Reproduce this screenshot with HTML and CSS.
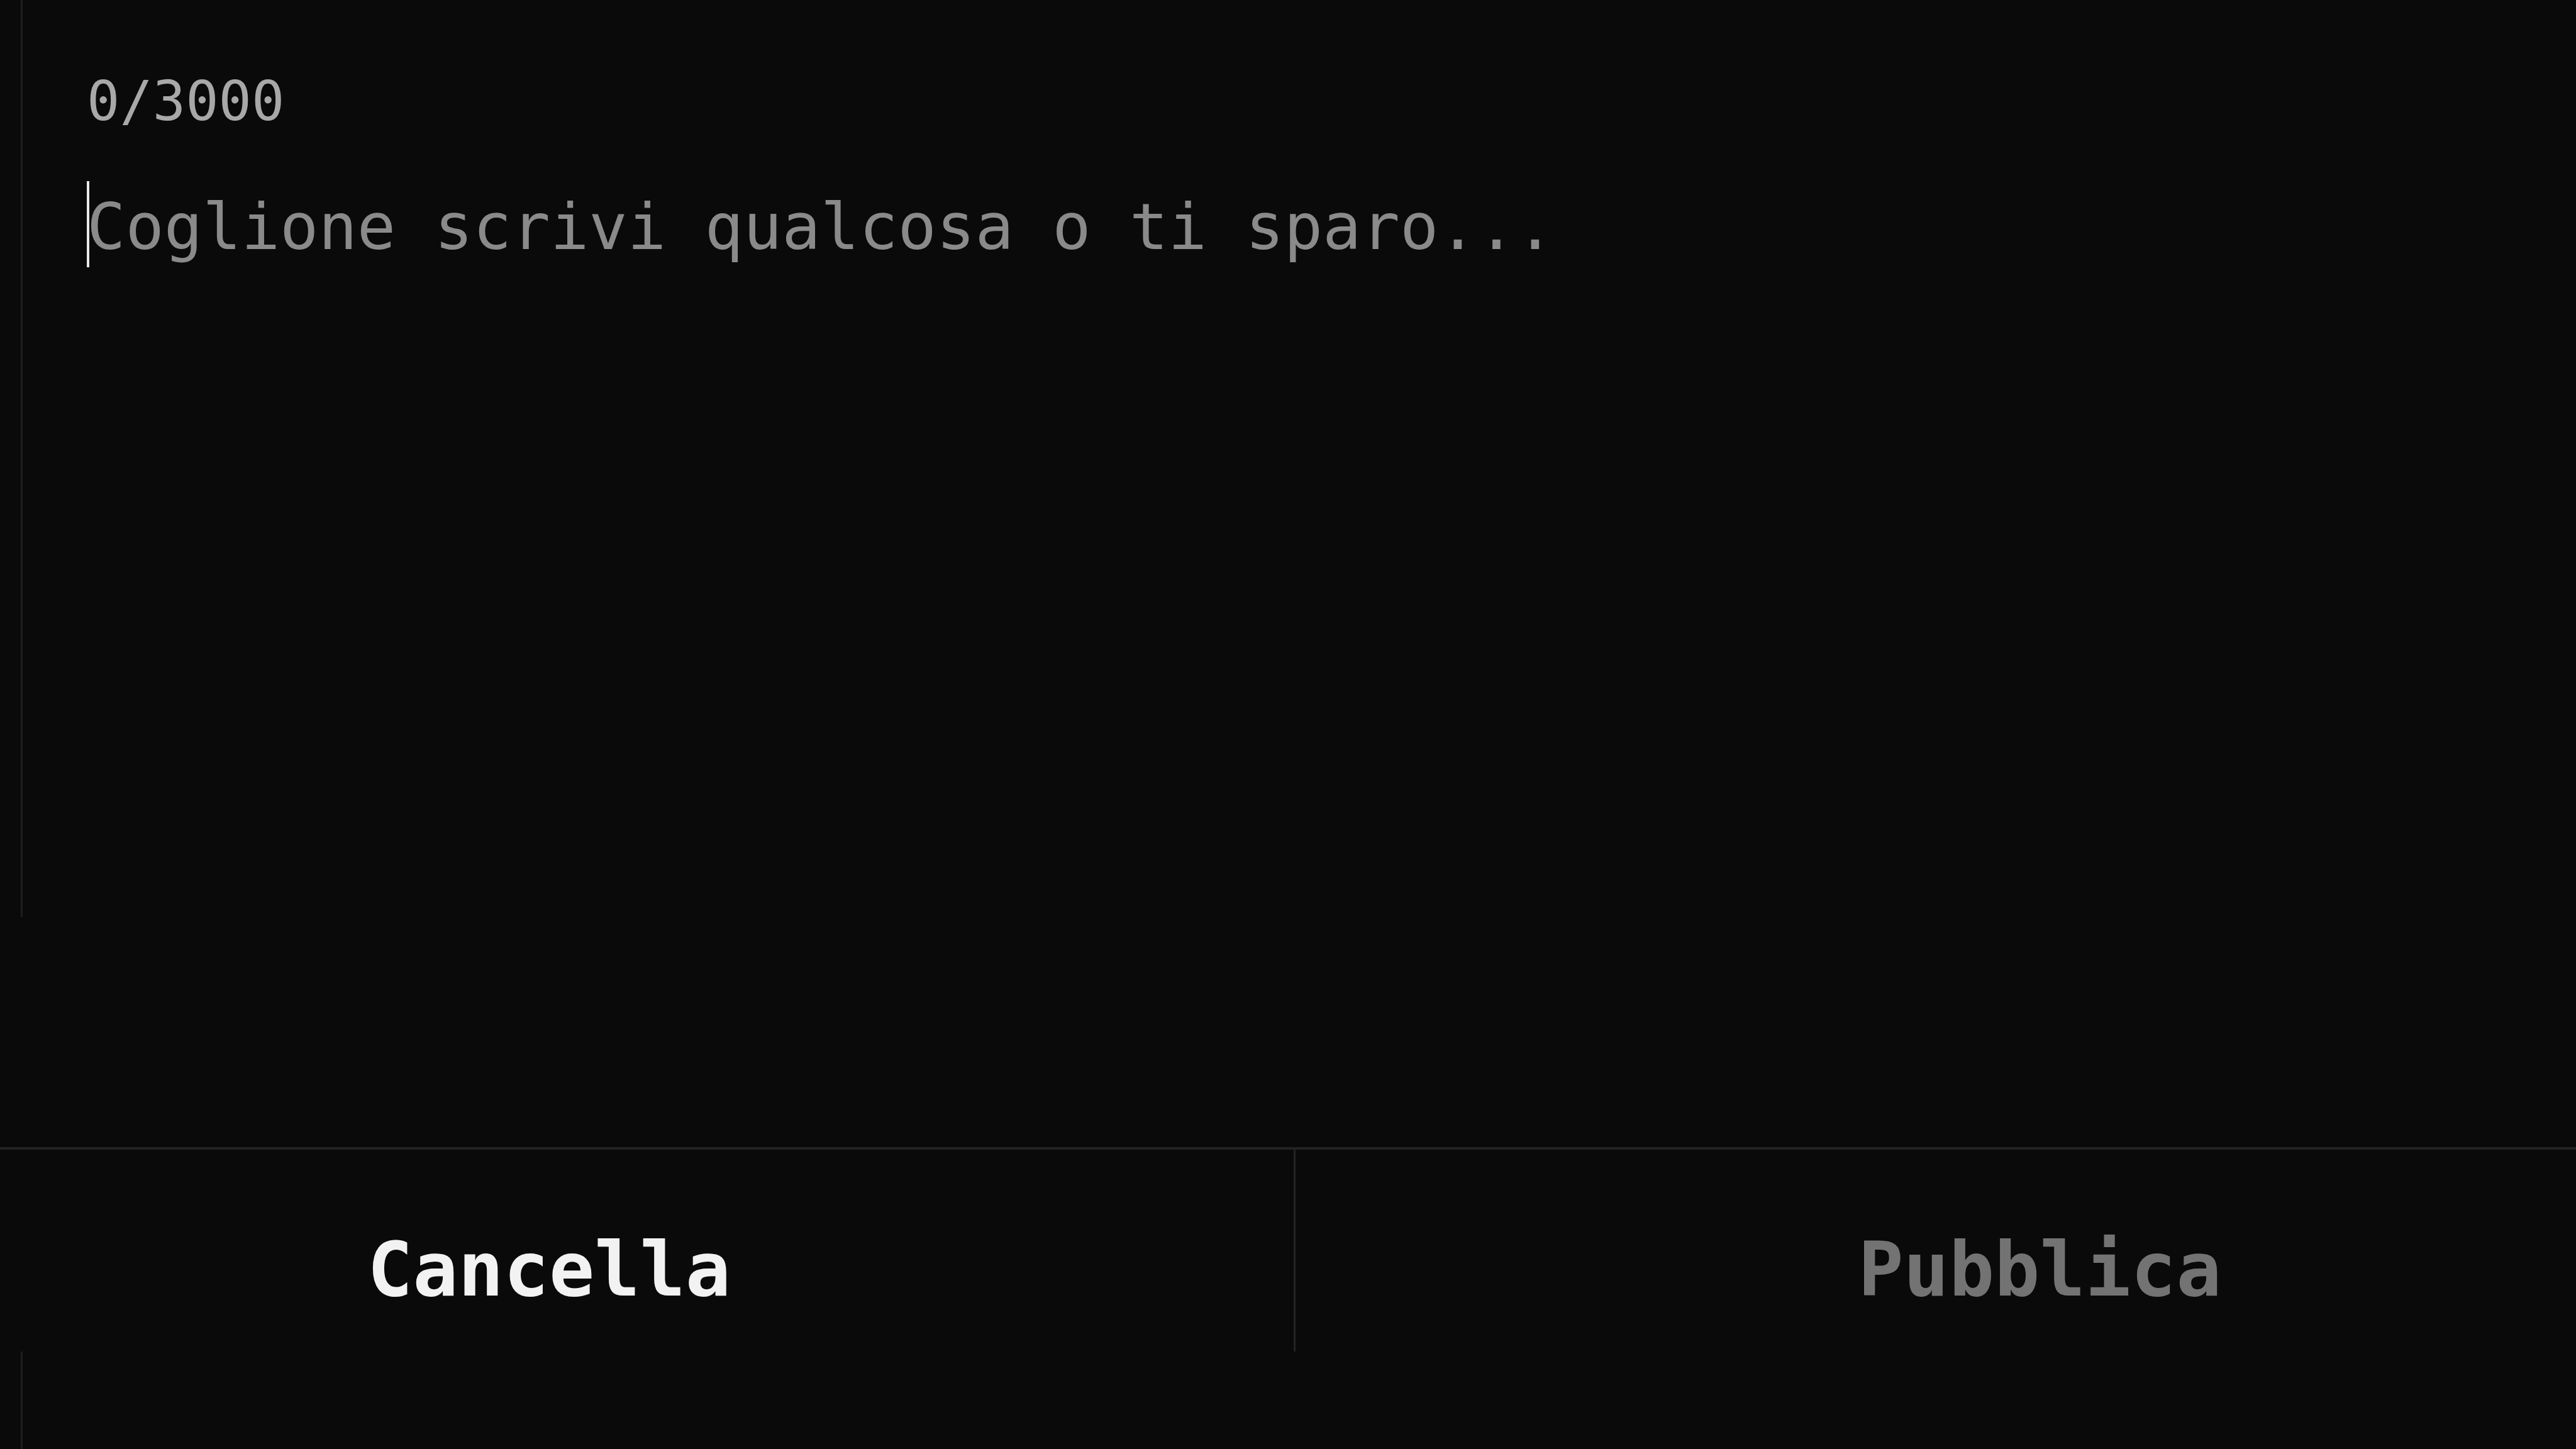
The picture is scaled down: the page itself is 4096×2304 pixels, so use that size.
FILE: index.html
```html
<!DOCTYPE html>
<html lang="it">
<head>
<meta charset="utf-8">
<title>Nuovo post</title>
<link rel="stylesheet" href="styles.css">
</head>
<body>
  <div class="editor">
    <div class="counter">0/3000</div>
    <div class="input-line">
      <span class="caret"></span>
      <span class="placeholder">Coglione scrivi qualcosa o ti sparo...</span>
    </div>
  </div>
  <div class="actions">
    <button class="btn btn-cancel">Cancella</button>
    <button class="btn btn-publish">Pubblica</button>
  </div>
  <div class="below"></div>
</body>
</html>
```
FILE: styles.css
```css
html, body {
  margin: 0;
  padding: 0;
}
body {
  background: #0a0a0a;
  width: 4096px;
  height: 2304px;
  overflow: hidden;
  font-family: "DejaVu Sans Mono", "Liberation Mono", monospace;
}
.editor {
  margin-left: 33px;
  border-left: 3px solid #1e1e1e;
  height: 1458px;
  box-sizing: border-box;
  padding-top: 118px;
  padding-left: 102px;
}
.counter {
  font-size: 87px;
  line-height: 1;
  color: #a8a8a8;
}
.input-line {
  position: relative;
  margin-top: 105px;
  font-size: 102px;
  line-height: 1;
}
.placeholder {
  color: #8a8a8a;
}
.caret {
  position: absolute;
  left: 0;
  top: -22px;
  width: 4px;
  height: 137px;
  background: #e8e8e8;
}
.actions {
  margin-top: 366px;
  border-top: 4px solid #222222;
  display: grid;
  grid-template-columns: 2057px 1fr;
  align-items: start;
}
.btn {
  background: transparent;
  border: 0;
  margin: 0;
  font-family: "DejaVu Sans Mono", "Liberation Mono", monospace;
  font-weight: bold;
  font-size: 120px;
  line-height: 1;
  padding-top: 131px;
  padding-bottom: 70px;
  text-align: center;
  display: block;
}
.btn-cancel {
  color: #f2f2f2;
  padding-right: 317px;
}
.btn-publish {
  color: #737373;
  border-left: 3px solid #242424;
  padding-left: 337px;
}
.below {
  margin-left: 33px;
  border-left: 3px solid #1e1e1e;
  height: 160px;
}
```
